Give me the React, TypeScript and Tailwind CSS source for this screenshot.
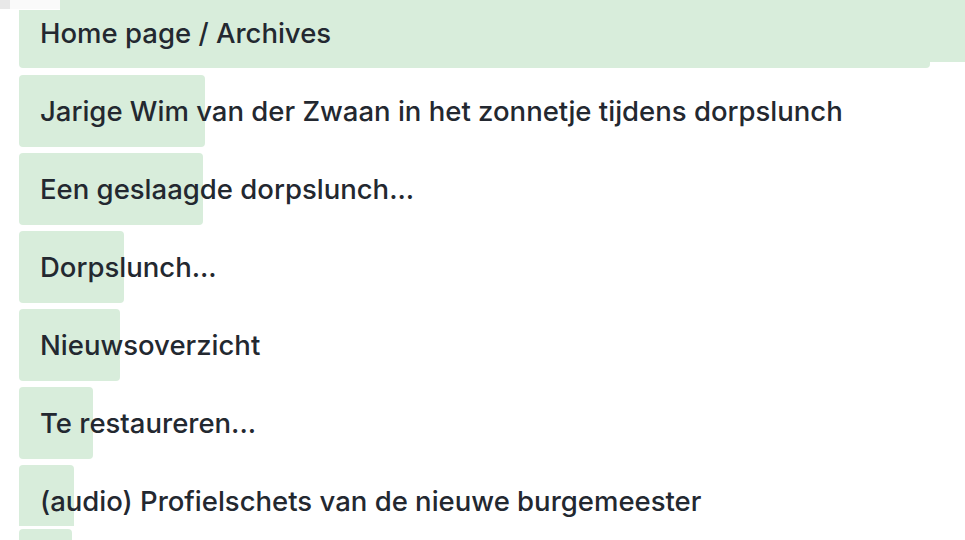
const items = [
  { title: "Jarige Wim van der Zwaan in het zonnetje tijdens dorpslunch", bg: "w-[186px] h-[72px] rounded" },
  { title: "Een geslaagde dorpslunch...", bg: "w-[184px] h-[72px] rounded" },
  { title: "Dorpslunch...", bg: "w-[105px] h-[72px] rounded" },
  { title: "Nieuwsoverzicht", bg: "w-[101px] h-[72px] rounded" },
  { title: "Te restaureren...", bg: "w-[74px] h-[72px] rounded" },
  { title: "(audio) Profielschets van de nieuwe burgemeester", bg: "w-[55px] h-[61px] rounded-t" },
];

const App = () => {
  return (
    <div className="w-[965px] h-[540px] overflow-hidden bg-white text-[#232830] font-['Inter','Liberation_Sans',sans-serif] font-medium">
      {/* Header / breadcrumb */}
      <div className="grid">
        <div className="col-start-1 row-start-1 flex">
          <div className="w-[10px] h-[9px] bg-[#e8e8e8]" />
          <div className="w-[50px] h-[9px] bg-[#fafafa]" />
          <div className="flex-1 h-[62px] bg-[#d8eddb]" />
        </div>
        <div className="col-start-1 row-start-1 mt-[10px] ml-[19px] w-[911px] h-[58px] bg-[#d8eddb] rounded-b" />
        <div className="col-start-1 row-start-1 pl-[40px] h-[68px] flex items-start pt-[16px] text-[27.5px] leading-[34px]">
          Home page / Archives
        </div>
      </div>

      {/* Archive list */}
      <div className="flex flex-col gap-[6px] mt-[7px]">
        {items.map((item, i) => (
          <div key={item.title} className="grid grid-rows-[72px]">
            <div className="col-start-1 row-start-1 ml-[19px] flex flex-col gap-[3px]">
              <div className={`shrink-0 bg-[#d8eddb] ${item.bg}`} />
              {i === items.length - 1 && <div className="shrink-0 w-[53px] h-[40px] bg-[#d8eddb] rounded-t" />}
            </div>
            <div className="col-start-1 row-start-1 pl-[40px] flex items-center text-[27.5px] leading-[34px] whitespace-nowrap">
              {item.title}
            </div>
          </div>
        ))}
      </div>
    </div>
  );
};

export default App;
